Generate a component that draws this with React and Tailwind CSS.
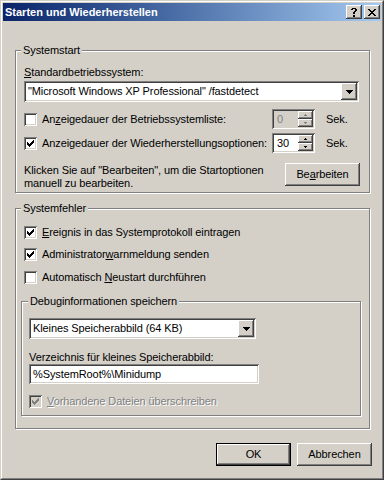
import React from "react";

const raised =
  "shadow-[inset_-1px_-1px_0_#404040,inset_1px_1px_0_#fff,inset_-2px_-2px_0_#808080,inset_2px_2px_0_#d4d0c8]";
const sunken =
  "shadow-[inset_1px_1px_0_#808080,inset_-1px_-1px_0_#fff,inset_2px_2px_0_#404040,inset_-2px_-2px_0_#d4d0c8]";
const etched =
  "border border-[#808080] shadow-[inset_1px_1px_0_#fff,1px_1px_0_#fff]";

const CheckMark = ({ color = "#000" }) => (
  <svg width="7" height="7" viewBox="0 0 7 7" shapeRendering="crispEdges">
    <path
      fill={color}
      d="M6 0h1v1H6z M5 1h2v1H5z M0 2h1v1H0z M4 2h3v1H4z M0 3h2v1H0z M3 3h3v1H3z M0 4h5v1H0z M1 5h3v1H1z M2 6h1v1H2z"
    />
  </svg>
);

const Check = ({ checked, disabled }) => (
  <div
    className={`flex h-[13px] w-[13px] shrink-0 items-center justify-center ${sunken} ${
      disabled ? "bg-[#d4d0c8]" : "bg-white"
    }`}
  >
    {checked && <CheckMark color={disabled ? "#808080" : "#000"} />}
  </div>
);

const DownArrow = () => (
  <svg width="7" height="4" viewBox="0 0 7 4" shapeRendering="crispEdges">
    <path d="M0 0h7v1H0z M1 1h5v1H1z M2 2h3v1H2z M3 3h1v1H3z" fill="#000" />
  </svg>
);

const SpinArrow = ({ up, color }) => (
  <svg width="3" height="2" viewBox="0 0 3 2" shapeRendering="crispEdges">
    <path
      fill={color}
      d={up ? "M1 0h1v1H1z M0 1h3v1H0z" : "M0 0h3v1H0z M1 1h1v1H1z"}
    />
  </svg>
);

const Combo = ({ className, text }) => (
  <div className={`flex h-[21px] items-center bg-white p-[2px] ${sunken} ${className}`}>
    <span className="flex-1 whitespace-nowrap pl-[2px] leading-[17px]">{text}</span>
    <div className={`flex h-[17px] w-[16px] items-center justify-center bg-[#d4d0c8] ${raised}`}>
      <DownArrow />
    </div>
  </div>
);

const Spin = ({ value, disabled }) => (
  <div
    className={`flex h-[20px] w-[43px] shrink-0 items-center p-[2px] ${sunken} ${
      disabled ? "bg-[#d4d0c8] text-[#808080]" : "bg-white"
    }`}
  >
    <span className="flex-1 pl-[3px] leading-[16px]">{value}</span>
    <div className="flex w-[15px] flex-col">
      <div className={`flex h-[8px] items-center justify-center bg-[#d4d0c8] ${raised}`}>
        <SpinArrow up color={disabled ? "#808080" : "#000"} />
      </div>
      <div className={`flex h-[8px] items-center justify-center bg-[#d4d0c8] ${raised}`}>
        <SpinArrow color={disabled ? "#808080" : "#000"} />
      </div>
    </div>
  </div>
);

const GroupLabel = ({ children, className }) => (
  <span className={`absolute -top-[7px] bg-[#d4d0c8] px-[2px] leading-[13px] ${className}`}>
    {children}
  </span>
);

const Button = ({ children, def, className }) =>
  def ? (
    <div className={`border border-black ${className}`}>
      <div className={`flex h-full items-center justify-center ${raised}`}>{children}</div>
    </div>
  ) : (
    <div className={`flex items-center justify-center ${raised} ${className}`}>{children}</div>
  );

const CheckRow = ({ checked, children, className }) => (
  <div className={`flex items-center ${className}`}>
    <Check checked={checked} />
    <span className="ml-[5px] whitespace-nowrap">{children}</span>
  </div>
);

export default function App() {
  return (
    <div className="h-[480px] w-[384px] border border-b-[#404040] border-l-[#d4d0c8] border-r-[#404040] border-t-[#d4d0c8] bg-[#d4d0c8] font-['Liberation_Sans',Arial,sans-serif] text-[11px] tracking-[-0.1px] text-black">
      <div className="flex h-full flex-col border border-b-[#808080] border-l-white border-r-[#808080] border-t-white p-px">
        {/* Title bar */}
        <div className="flex h-[18px] shrink-0 items-center bg-linear-to-r from-[#0a246a] to-[#a6caf0] pl-[2px] pr-[1px]">
          <span className="flex-1 text-[11px] font-bold leading-[18px] tracking-normal text-white">
            Starten und Wiederherstellen
          </span>
          <div className={`flex h-[14px] w-[16px] items-center justify-center bg-[#d4d0c8] ${raised}`}>
            <svg width="6" height="9" viewBox="0 0 6 9" shapeRendering="crispEdges">
              <path
                fill="#000"
                d="M1 0h4v1H1z M0 1h2v1H0z M4 1h2v1H4z M4 2h2v1H4z M3 3h2v1H3z M2 4h2v1H2z M2 5h2v1H2z M2 7h2v2H2z"
              />
            </svg>
          </div>
          <div className={`ml-[2px] flex h-[14px] w-[16px] items-center justify-center bg-[#d4d0c8] ${raised}`}>
            <svg width="8" height="7" viewBox="0 0 8 7" shapeRendering="crispEdges">
              <path
                fill="#000"
                d="M0 0h2v1H0z M6 0h2v1H6z M1 1h2v1H1z M5 1h2v1H5z M2 2h4v1H2z M3 3h2v1H3z M2 4h4v1H2z M1 5h2v1H1z M5 5h2v1H5z M0 6h2v1H0z M6 6h2v1H6z"
              />
            </svg>
          </div>
        </div>

        {/* Systemstart */}
        <div className={`relative ml-[12px] mt-[29px] h-[143px] w-[355px] pl-[8px] ${etched}`}>
          <GroupLabel className="left-[5px]">Systemstart</GroupLabel>
          <div className="mt-[14px] h-[14px] leading-[14px]">
            <u>S</u>tandardbetriebssystem:
          </div>
          <Combo
            className="mt-[2px] w-[335px]"
            text={'"Microsoft Windows XP Professional" /fastdetect'}
          />
          <div className="mt-[7px] flex h-[20px] items-center">
            <Check />
            <span className="ml-[5px] w-[230px] shrink-0 whitespace-nowrap">
              An<u>z</u>eigedauer der Betriebssystemliste:
            </span>
            <Spin value="0" disabled />
            <span className="ml-[11px]">Sek.</span>
          </div>
          <div className="mt-[4px] flex h-[20px] items-center">
            <Check checked />
            <span className="ml-[5px] w-[230px] shrink-0 whitespace-nowrap">
              Anzei<u>g</u>edauer der Wiederherstellungsoptionen:
            </span>
            <Spin value="30" />
            <span className="ml-[11px]">Sek.</span>
          </div>
          <div className="mt-[10px] flex items-start">
            <p className="mt-[1px] w-[261px] leading-[13px]">
              Klicken Sie auf "Bearbeiten", um die Startoptionen manuell zu bearbeiten.
            </p>
            <Button className="h-[23px] w-[75px]">
              Be<u>a</u>rbeiten
            </Button>
          </div>
        </div>

        {/* Systemfehler */}
        <div className={`relative ml-[12px] mt-[15px] h-[221px] w-[355px] ${etched}`}>
          <GroupLabel className="left-[5px]">Systemfehler</GroupLabel>
          <div className="pl-[8px] pt-[15px]">
            <CheckRow checked className="h-[17px]">
              <u>E</u>reignis in das Systemprotokoll eintragen
            </CheckRow>
            <CheckRow checked className="mt-[5px] h-[17px]">
              Administrator<u>w</u>arnmeldung senden
            </CheckRow>
            <CheckRow className="mt-[6px] h-[17px]">
              Automatisch <u>N</u>eustart durchführen
            </CheckRow>
          </div>

          {/* Debuginformationen */}
          <div className={`relative ml-[5px] mt-[15px] h-[115px] w-[340px] pl-[7px] ${etched}`}>
            <GroupLabel className="left-[6px]">Debuginformationen speichern</GroupLabel>
            <Combo className="mt-[16px] w-[227px]" text="Kleines Speicherabbild (64 KB)" />
            <div className="mt-[12px] h-[13px] leading-[13px]">
              Verzeichnis für kleines Speicherabbild:
            </div>
            <div className={`flex h-[20px] w-[230px] items-center bg-white pl-[4px] ${sunken}`}>
              %SystemRoot%\Minidump
            </div>
            <div className="mt-[10px] flex h-[15px] items-center">
              <Check checked disabled />
              <span className="ml-[5px] text-[#808080] [text-shadow:1px_1px_0_#fff]">
                <u>V</u>orhandene Dateien überschreiben
              </span>
            </div>
          </div>
        </div>

        {/* Buttons */}
        <div className="mt-[14px] flex justify-end gap-[6px] pr-[9px]">
          <Button def className="h-[23px] w-[75px]">
            OK
          </Button>
          <Button className="h-[23px] w-[75px]">Abbrechen</Button>
        </div>
      </div>
    </div>
  );
}
